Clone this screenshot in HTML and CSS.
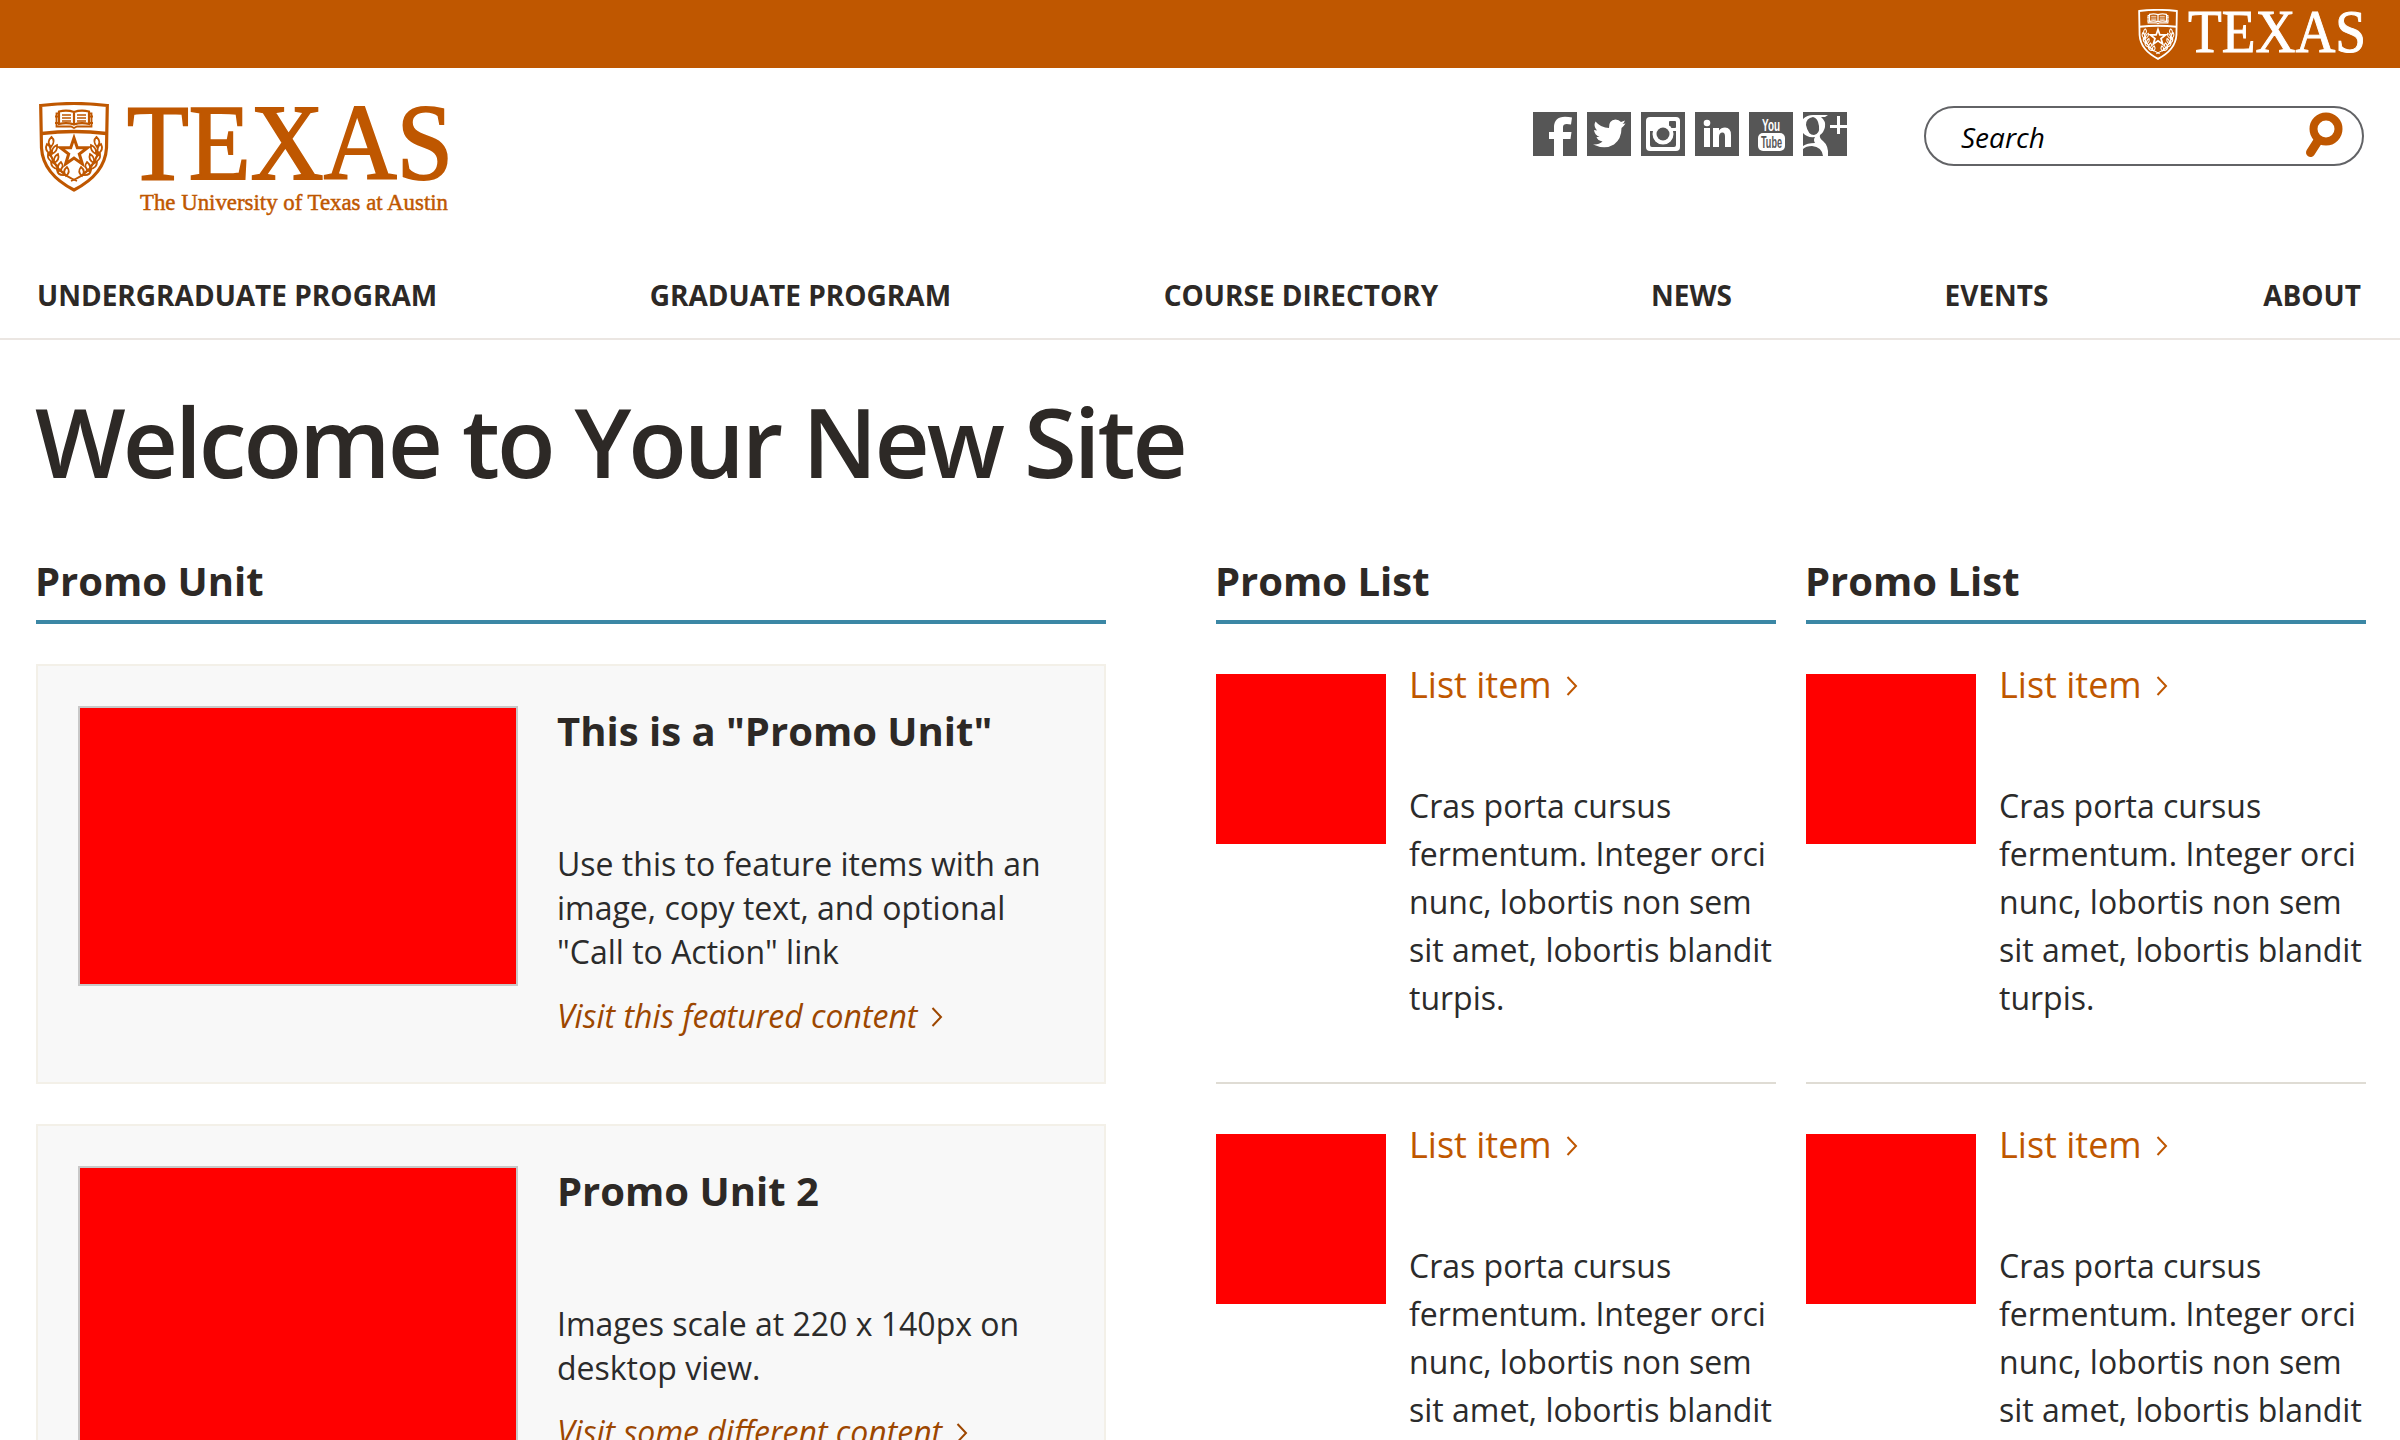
FILE: index.html
```html
<!DOCTYPE html>
<html lang="en">
<head>
<meta charset="utf-8">
<title>Welcome to Your New Site</title>
<link rel="stylesheet" href="styles.css">
</head>
<body>
<svg class="defs" aria-hidden="true">
  <symbol id="shield" viewBox="0 0 70 90">
    <g fill="none" stroke="currentColor">
      <path d="M1.700 3.500Q35 -.5 68.300 3.500L67.500 46Q66 72 35 88Q4 72 2.500 46Z" stroke-width="3.200"/>
      <path d="M2.500 31.500Q35 27.500 67.500 31.500" stroke-width="3.600"/>
      <path d="M20 9.500Q28 7.500 35 10Q42 7.500 50 9.500V22Q42 20 35 22.500Q28 20 20 22ZM35 10V23" stroke-width="2.200"/>
      <path d="M23 13H32M23 16H32M23 19H32M38 13H47M38 16H47M38 19H47" stroke-width="1.300"/>
      <path d="M20 11.500H17.500V24.500H32L35 26L38 24.500H52.500V11.500H50M16 14.500H19M16 21H19M51 14.500H54M51 21H54" stroke-width="1.800"/>
      <path d="M35 36L38.300 45.800H48.500L40.300 52L43.400 62L35 56L26.600 62L29.700 52L21.500 45.800H31.700Z" stroke-width="3"/>
      <g id="branch" stroke-width="1.800">
        <path d="M11 49Q15 70 38 79"/>
        <path d="M12.500 35Q17 39 12 45Q7 40 12.500 35ZM8 42Q13 45 11 52Q5 48 8 42ZM18 43Q19 49 13 52Q12 46 18 43ZM9 52Q14 55 14 60Q8 58 9 52ZM19 52Q21 58 15 61Q14 55 19 52ZM12 60Q18 61 19 67Q12 66 12 60ZM22 60Q26 65 20 69Q17 64 22 60ZM18 68Q23 68 26 73Q19 74 18 68ZM28 65Q32 70 27 74Q23 69 28 65Z"/>
      </g>
      <use href="#branch" transform="matrix(-1 0 0 1 70 0)"/>
    </g>
  </symbol>
  <symbol id="chevron" viewBox="0 0 12 20"><path d="M1.500 1L10 10L1.500 19" fill="none" stroke="currentColor" stroke-width="2"/></symbol>
</svg>

<div class="brandbar">
  <svg class="brandbar-logo" viewBox="0 0 228 52"><use href="#shield" x="0" y="1" width="40" height="51"/><text class="wordmark small" x="50" y="44" textLength="178" lengthAdjust="spacingAndGlyphs">TEXAS</text></svg>
</div>

<header class="header">
  <svg class="logo" viewBox="0 0 412 116"><use href="#shield" x="0" y="0" width="70" height="90"/><text class="wordmark" x="88" y="76.500" textLength="326" lengthAdjust="spacingAndGlyphs">TEXAS</text><text class="tagline" x="101" y="108" textLength="308" lengthAdjust="spacingAndGlyphs">The University of Texas at Austin</text></svg>
  <div class="tools">
    <div class="social">
      <svg viewBox="0 0 44 44"><rect width="44" height="44"/><path class="w" d="M21 44V27H16V20H21V15Q21 5 32 4.700Q36 4.700 39 5.500L38 12.500Q30 10.500 30 15V20H38.500L37.500 27H30V44Z"/></svg>
      <svg viewBox="0 0 44 44"><rect width="44" height="44"/><path class="w" d="M38.500 11.500Q37 14 34.500 16Q34.500 27 27 32.500Q18 38 6 32.500Q12 33 15.500 29.500Q10.500 28.500 9.500 25H12.500Q7.500 23 7 18L10 18.500Q6 14 8.500 9.500Q14 16 22 16Q21.500 8 28.500 7.500Q32 7.500 34 10L38 8.500Q37 11 35.500 12Z"/></svg>
      <svg viewBox="0 0 44 44"><rect width="44" height="44"/><rect class="w" x="5" y="5" width="34" height="34" rx="4"/><rect x="28" y="9" width="7" height="7" rx="1"/><path d="M9 19H12Q12 32 22 32Q32 32 32 19H35V33Q35 35 33 35H11Q9 35 9 33Z"/><circle class="w" cx="22" cy="22" r="10.500"/><circle cx="22" cy="22" r="6.500"/></svg>
      <svg viewBox="0 0 44 44"><rect width="44" height="44"/><circle class="w" cx="12" cy="11" r="3.300"/><path class="w" d="M9 16H15V35H9ZM18 16H24V18.500Q26 15.500 30 15.500Q36 15.500 36 23V35H30V24.500Q30 20.500 27.500 20.500Q24 20.500 24 25V35H18Z"/></svg>
      <svg viewBox="0 0 44 44"><rect width="44" height="44"/><rect class="w" x="9" y="21" width="27" height="18" rx="5"/><text class="yt w" x="13" y="19" textLength="18" lengthAdjust="spacingAndGlyphs">You</text><text class="yt" x="12" y="35.500" textLength="21" lengthAdjust="spacingAndGlyphs">Tube</text></svg>
      <svg viewBox="0 0 44 44"><rect width="44" height="44"/><path class="w" d="M0 7Q4 3 10 3H25L22 5H18Q23 9 22 15Q21 20 17 23Q16 26 20 29Q26 34 25 44H20Q19 35 9 34Q3 34 0 37V34Q4 31 12 31Q10 28 12 25Q4 26 0 21ZM10 5Q3 6 3 13Q5 23 11 23Q17 22 16 14Q15 6 10 5ZM34 4H37V13H44V16H37V22H34V16H27V13H34Z" fill-rule="evenodd"/></svg>
    </div>
    <div class="search"><span>Search</span><svg viewBox="0 0 40 48"><circle cx="22" cy="17" r="12.500" fill="none" stroke="#bf5700" stroke-width="8"/><path d="M14.500 28L6.500 40.500" stroke="#bf5700" stroke-width="9" stroke-linecap="round"/></svg></div>
  </div>
</header>

<nav class="nav"><a>UNDERGRADUATE PROGRAM</a><a>GRADUATE PROGRAM</a><a>COURSE DIRECTORY</a><a>NEWS</a><a>EVENTS</a><a>ABOUT</a></nav>

<main>
  <h1>Welcome to Your New Site</h1>
  <div class="columns">
    <section class="units">
      <h2>Promo Unit</h2>
      <article class="card"><div class="photo"></div><div class="copy"><h3>This is a "Promo Unit"</h3><p>Use this to feature items with an image, copy text, and optional "Call to Action" link</p><a class="cta">Visit this featured content<svg class="chev"><use href="#chevron"/></svg></a></div></article>
      <article class="card"><div class="photo"></div><div class="copy"><h3>Promo Unit 2</h3><p>Images scale at 220 x 140px on desktop view.</p><a class="cta">Visit some different content<svg class="chev"><use href="#chevron"/></svg></a></div></article>
    </section>
    <section class="list">
      <h2>Promo List</h2>
      <article class="item"><div class="thumb"></div><div><a class="title">List item<svg class="chev"><use href="#chevron"/></svg></a><p>Cras porta cursus fermentum. Integer orci nunc, lobortis non sem sit amet, lobortis blandit turpis.</p></div></article>
      <article class="item"><div class="thumb"></div><div><a class="title">List item<svg class="chev"><use href="#chevron"/></svg></a><p>Cras porta cursus fermentum. Integer orci nunc, lobortis non sem sit amet, lobortis blandit</p></div></article>
    </section>
    <section class="list">
      <h2>Promo List</h2>
      <article class="item"><div class="thumb"></div><div><a class="title">List item<svg class="chev"><use href="#chevron"/></svg></a><p>Cras porta cursus fermentum. Integer orci nunc, lobortis non sem sit amet, lobortis blandit turpis.</p></div></article>
      <article class="item"><div class="thumb"></div><div><a class="title">List item<svg class="chev"><use href="#chevron"/></svg></a><p>Cras porta cursus fermentum. Integer orci nunc, lobortis non sem sit amet, lobortis blandit</p></div></article>
    </section>
  </div>
</main>
</body>
</html>
```
FILE: styles.css
```css
* { box-sizing: border-box; margin: 0; padding: 0; }
html, body { height: 1440px; overflow: hidden; }
body { background: #fff; color: #2d2926; font-family: "Open Sans", "Noto Sans", sans-serif; font-size: 32px; }
.defs { display: none; }
svg { display: block; }

.brandbar { height: 68px; padding: 8px 34px 0 0; display: flex; justify-content: flex-end; background: #bf5700; color: #fff; }
.brandbar-logo { width: 228px; height: 52px; overflow: visible; }
.wordmark { font: 108px "Liberation Serif", serif; fill: currentColor; stroke: currentColor; stroke-width: 2px; }
.wordmark.small { font-size: 61px; stroke-width: 1px; }
.tagline { font: 24px "Liberation Serif", serif; fill: currentColor; stroke: currentColor; stroke-width: .5px; }

.header { height: 192px; padding: 34px 36px 0 39px; display: flex; justify-content: space-between; align-items: flex-start; }
.logo { width: 412px; height: 116px; overflow: visible; color: #bf5700; }
.tools { display: flex; gap: 77px; padding-top: 4px; }
.social { display: flex; gap: 10px; padding-top: 6px; }
.social svg { width: 44px; height: 44px; fill: #565656; }
.social .w { fill: #fff; }
.yt { font: bold 16px "Liberation Sans", sans-serif; }
.search { width: 440px; height: 60px; padding: 0 18px 0 35px; border: 2px solid #626366; border-radius: 30px; display: flex; justify-content: space-between; font-size: 28px; font-style: italic; line-height: 59px; color: #000; }
.search svg { width: 40px; height: 48px; margin: 4px 0 0; }

.nav { height: 80px; padding: 15px 39px 0 37px; border-bottom: 2px solid #ebe6e2; display: flex; justify-content: space-between; font-size: 28px; font-weight: 700; line-height: 40px; }
.nav a:last-child { margin-left: 2px; }

main { padding: 36px 34px 0 36px; }
h1 { margin-left: -1px; font-size: 96px; font-weight: 600; line-height: 130px; letter-spacing: -3px; }
.columns { display: flex; padding-top: 40px; }
.units { width: 1070px; margin-right: 110px; }
.list { width: 560px; margin-right: 30px; flex: none; }
h2 { height: 78px; font-size: 40px; font-weight: 700; line-height: 69px; text-indent: -1px; border-bottom: 4px solid #3b87a5; }
.card { width: 1070px; height: 420px; margin: 40px 0; padding: 40px; border: 2px solid #f3f0e8; background: #f8f8f8; display: flex; gap: 39px; }
.photo { width: 440px; height: 280px; flex: none; border: 2px solid #c8c8c8; background: #f00; }
h3 { margin: -2px 0 84px; font-size: 40px; font-weight: 700; line-height: 54px; }
.card p { width: 500px; line-height: 44px; color: #2b2b2b; }
.cta { display: flex; align-items: center; margin-top: 20px; line-height: 44px; font-style: italic; color: #9d4700; }
.chev { width: 12px; height: 20px; margin: 2px 0 0 14px; }
.item { height: 460px; padding-top: 50px; border-bottom: 2px solid #dfdcd4; display: flex; gap: 23px; }
.thumb { width: 170px; height: 170px; flex: none; background: #f00; }
.title { display: flex; align-items: center; margin: -13px 0 73px; font-size: 36px; line-height: 48px; color: #bf5700; }
.item p { line-height: 48px; color: #2b2b2b; }
```
